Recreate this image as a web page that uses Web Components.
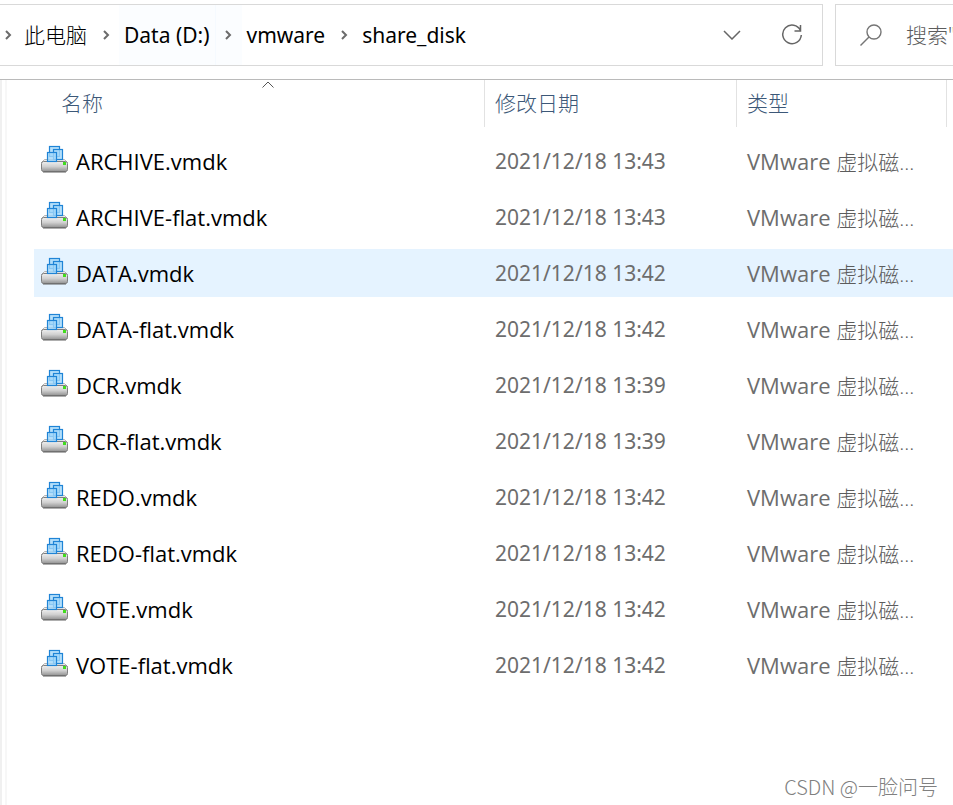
<!DOCTYPE html>
<html lang="zh-CN">
<head>
<meta charset="utf-8">
<meta name="viewport" content="width=device-width, initial-scale=1">
<title>share_disk</title>
<style>
    body {
        margin: 0;
        background: #fff;
        color: #000;
        font: 21px/28px "Noto Sans", "Noto Sans CJK SC", sans-serif;
        overflow-x: hidden;
    }
</style>
</head>
<body>
<explorer-window>
    <address-bar slot="toolbar">
        <path-crumb light>此电脑</path-crumb>
        <path-crumb active>Data (D:)</path-crumb>
        <path-crumb>vmware</path-crumb>
        <path-crumb>share_disk</path-crumb>
    </address-bar>
    <search-box slot="toolbar" placeholder='搜索"'></search-box>
    <file-list></file-list>
    <span slot="watermark">CSDN @一脸问号</span>
</explorer-window>

<script>
class ExplorerWindow extends HTMLElement {

    constructor() {
        super();
        this.attachShadow({ mode: 'open' });
        this.shadowRoot.innerHTML = `
            <style>
                :host {
                    display: flex;
                    flex-direction: column;
                    min-height: 100vh;
                    position: relative;
                }
                header {
                    display: flex;
                    gap: 12px;
                    padding: 4px 0 13px;
                    border-bottom: 1px solid #bababa;
                }
                main {
                    flex: 1;
                    display: flex;
                }
                div[part=splitter] {
                    flex: none;
                    box-sizing: border-box;
                    width: 7px;
                    margin-right: 27px;
                    border-left: 2px solid #f0f0f0;
                    border-right: 2px solid #f7f7f7;
                }
                footer {
                    position: absolute;
                    right: 15px;
                    bottom: 4px;
                    font: 300 20px/28px "Noto Sans CJK SC", sans-serif;
                    color: #808080;
                }
            </style>
            <header><slot name="toolbar"></slot></header>
            <main><div part="splitter"></div><slot></slot></main>
            <footer><slot name="watermark"></slot></footer>
        `;
    }

}

class AddressBar extends HTMLElement {

    constructor() {
        super();
        this.attachShadow({ mode: 'open' });
        this.shadowRoot.innerHTML = `
            <style>
                :host {
                    display: flex;
                    flex: 1;
                    min-width: 0;
                    box-sizing: border-box;
                    height: 62px;
                    border: 1px solid #d9d9d9;
                    border-left: 0;
                }
                nav {
                    display: flex;
                    flex: 1;
                    align-items: stretch;
                    min-width: 0;
                    padding-left: 4px;
                }
                nav > svg {
                    align-self: center;
                    flex: none;
                    margin-right: 7px;
                    stroke: #6b6b6b;
                    stroke-width: 2;
                }
                button {
                    display: flex;
                    align-items: center;
                    justify-content: center;
                    width: 60px;
                    padding: 0;
                    border: 0;
                    background: none;
                }
                svg {
                    fill: none;
                    stroke: #666;
                    stroke-width: 1.5;
                }
            </style>
            <nav aria-label="路径">
                <svg width="8" height="10" viewBox="0 0 8 10"><path d="M2 1l4 4-4 4"/></svg>
                <slot></slot>
            </nav>
            <button type="button" aria-label="以前的位置">
                <svg width="18" height="10" viewBox="0 0 18 10"><path d="M1 1l8 8 8-8"/></svg>
            </button>
            <button type="button" aria-label="刷新">
                <svg width="22" height="22" viewBox="0 0 22 22"><path d="M19.500 6.500A9.300 9.300 0 1 0 20.300 11M19.500 1v6h-6"/></svg>
            </button>
        `;
    }

}

class PathCrumb extends HTMLElement {

    constructor() {
        super();
        this.attachShadow({ mode: 'open' });
        this.shadowRoot.innerHTML = `
            <style>
                :host {
                    display: flex;
                    flex: none;
                }
                :host([light]) {
                    font-weight: 300;
                }
                :host(:last-child) span {
                    display: none;
                }
                span {
                    display: flex;
                    align-items: center;
                    justify-content: center;
                    width: 27px;
                }
                svg {
                    fill: none;
                    stroke: #6b6b6b;
                    stroke-width: 2;
                }
                a {
                    display: flex;
                    align-items: center;
                    padding: 0 5px;
                    color: #000;
                    text-decoration: none;
                }
                :host([active]) {
                    background: #fbfdff;
                }
                :host([active]) a {
                    box-shadow: 1px 0 #f5faff;
                }
            </style>
            <a href="#"><slot></slot></a>
            <span><svg width="8" height="10" viewBox="0 0 8 10"><path d="M2 1l4 4-4 4"/></svg></span>
        `;
    }

}

class SearchBox extends HTMLElement {

    constructor() {
        super();
        this.attachShadow({ mode: 'open' });
        this.shadowRoot.innerHTML = `
            <style>
                :host {
                    display: flex;
                    align-items: center;
                    box-sizing: border-box;
                    width: 118px;
                    border: 1px solid #d9d9d9;
                    border-right: 0;
                    padding-left: 24px;
                }
                label {
                    display: flex;
                }
                svg {
                    fill: none;
                    stroke: #757575;
                    stroke-width: 1.4;
                }
                input {
                    flex: 1;
                    min-width: 0;
                    margin-left: 23px;
                    padding: 0;
                    border: 0;
                    outline: 0;
                    background: none;
                    font: inherit;
                    font-weight: 300;
                }
                input::placeholder {
                    color: #5c5c5c;
                    opacity: 1;
                }
            </style>
            <label for="query" aria-label="搜索">
                <svg width="23" height="22" viewBox="0 0 23 22"><circle cx="14" cy="8" r="7"/><path d="M9 13l-8.500 8.500"/></svg>
            </label>
            <input id="query" type="text">
        `;
    }

    connectedCallback() {
        this.shadowRoot.querySelector('input').placeholder = this.getAttribute('placeholder');
    }

}

class DiskIcon extends HTMLElement {

    constructor() {
        super();
        this.attachShadow({ mode: 'open' });
        this.shadowRoot.innerHTML = `
            <style>
                :host {
                    display: block;
                    flex: none;
                    width: 28px;
                    height: 28px;
                }
                svg {
                    display: block;
                }
            </style>
            <svg width="28" height="28" viewBox="0 0 28 28">
                <defs>
                    <linearGradient id="metal" x1="0" y1="0" x2="0" y2="1">
                        <stop offset="0" stop-color="#f0f0f0"/>
                        <stop offset="0.500" stop-color="#d0d0d0"/>
                        <stop offset="1" stop-color="#929292"/>
                    </linearGradient>
                </defs>
                <path d="M3.500 14.500h20l3 3h-26z" fill="#ececec" stroke="#b5b5b5"/>
                <rect x="0.500" y="16.500" width="26" height="10" rx="2" fill="url(#metal)" stroke="#808080"/>
                <path d="M2 27h23" stroke="#606060"/>
                <g fill="#a4d8fa" fill-opacity="0.800" stroke="#1f84d6" stroke-width="1.200">
                    <rect x="8.500" y="1.500" width="10" height="10"/>
                    <rect x="12.500" y="4.500" width="9" height="10"/>
                    <rect x="6.500" y="7.500" width="9" height="9"/>
                </g>
                <rect x="22" y="17" width="3" height="3" fill="#42dc1e"/>
            </svg>
        `;
    }

}

class FileList extends HTMLElement {

    constructor() {
        super();
        this.attachShadow({ mode: 'open' });
        this.shadowRoot.innerHTML = `
            <style>
                :host {
                    display: block;
                    flex: 1;
                    min-width: 0;
                }
                table {
                    width: 100%;
                    table-layout: fixed;
                    border-collapse: separate;
                    border-spacing: 0;
                }
                col.name {
                    width: 450px;
                }
                col.date {
                    width: 252px;
                }
                th {
                    padding: 0 0 6px;
                    font-weight: 300;
                }
                th:first-child {
                    padding-left: 16px;
                }
                th:last-child {
                    padding-right: 6px;
                }
                th button {
                    display: block;
                    position: relative;
                    width: 100%;
                    height: 47px;
                    padding: 0 0 2px 10px;
                    border: 0;
                    border-left: 1px solid #e2e2e2;
                    background: none;
                    font: inherit;
                    color: #3c5878;
                    text-align: left;
                }
                th:first-child button {
                    border-left-color: transparent;
                }
                th:last-child button {
                    border-right: 1px solid #e2e2e2;
                }
                th svg {
                    position: absolute;
                    top: 1px;
                    left: 50%;
                    margin-left: -6px;
                    fill: none;
                    stroke: #555;
                }
                td {
                    height: 48px;
                    padding: 0 0 0 11px;
                    border: solid transparent;
                    border-width: 4px 0;
                    background-clip: padding-box;
                    color: #6d6d6d;
                    white-space: nowrap;
                    overflow: hidden;
                }
                td:first-child {
                    padding-left: 7px;
                    color: #000;
                }
                td:first-child,
                td:last-child {
                    font-family: "Open Sans", "Noto Sans CJK SC", sans-serif;
                    font-size: 22px;
                }
                tr[selected] td {
                    background-color: #e5f3ff;
                }
                tr[selected] td:first-child {
                    border-radius: 2px 0 0 2px;
                }
                div[part=file] {
                    display: flex;
                    align-items: center;
                    gap: 7px;
                }
                disk-icon {
                    margin-bottom: 4px;
                }
                span[part=kind] {
                    font-size: 21px;
                    font-weight: 300;
                    color: #5c5c5c;
                }
            </style>
            <table>
                <colgroup><col class="name"><col class="date"><col></colgroup>
                <thead>
                    <tr>
                        <th aria-sort="ascending">
                            <button type="button">名称<svg width="12" height="7" viewBox="0 0 12 7"><path d="M0.500 6.500L6 1l5.500 5.500"/></svg></button>
                        </th>
                        <th><button type="button">修改日期</button></th>
                        <th><button type="button">类型</button></th>
                    </tr>
                </thead>
                <tbody></tbody>
            </table>
        `;
    }

    connectedCallback() {
        this.files = [
            { name: 'ARCHIVE.vmdk', date: '2021/12/18 13:43' },
            { name: 'ARCHIVE-flat.vmdk', date: '2021/12/18 13:43' },
            { name: 'DATA.vmdk', date: '2021/12/18 13:42', selected: true },
            { name: 'DATA-flat.vmdk', date: '2021/12/18 13:42' },
            { name: 'DCR.vmdk', date: '2021/12/18 13:39' },
            { name: 'DCR-flat.vmdk', date: '2021/12/18 13:39' },
            { name: 'REDO.vmdk', date: '2021/12/18 13:42' },
            { name: 'REDO-flat.vmdk', date: '2021/12/18 13:42' },
            { name: 'VOTE.vmdk', date: '2021/12/18 13:42' },
            { name: 'VOTE-flat.vmdk', date: '2021/12/18 13:42' }
        ];
    }

    set files(list) {
        this.shadowRoot.querySelector('tbody').innerHTML = list.map(file => `
            <tr${file.selected ? ' selected' : ''}>
                <td><div part="file"><disk-icon></disk-icon><span>${file.name}</span></div></td>
                <td>${file.date}</td>
                <td>VMware <span part="kind">虚拟磁...</span></td>
            </tr>
        `).join('');
    }

}

customElements.define('explorer-window', ExplorerWindow);
customElements.define('address-bar', AddressBar);
customElements.define('path-crumb', PathCrumb);
customElements.define('search-box', SearchBox);
customElements.define('disk-icon', DiskIcon);
customElements.define('file-list', FileList);
</script>
</body>
</html>
